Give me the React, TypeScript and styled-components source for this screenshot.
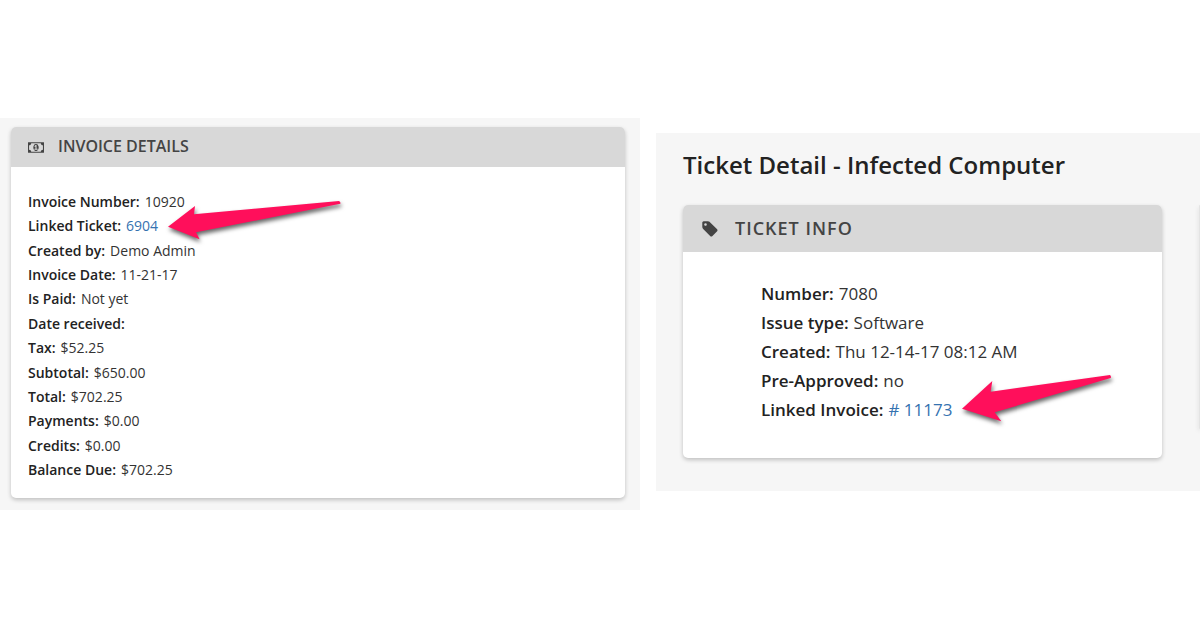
import React from "react";
import styled, { createGlobalStyle } from "styled-components";

const GlobalStyle = createGlobalStyle`
  * { box-sizing: border-box; }
  body {
    margin: 0;
    background: #fff;
    color: #333;
    font-family: "Open Sans", "Noto Sans", sans-serif;
  }
`;

const Page = styled.main`
  display: grid;
  grid-template-columns: minmax(0, 640fr) minmax(0, 544fr);
  column-gap: 16px;
  align-items: start;
  padding: 118px 0;
  overflow: hidden;
`;

const InvoicePane = styled.section`
  background: #f6f6f6;
  padding: 9px 15px 12px 11px;
`;

const TicketPane = styled.section`
  background: #f6f6f6;
  margin-top: 15px;
  padding: 15px 0 33px 27px;
  overflow: hidden;
`;

const Title = styled.h1`
  margin: 0 0 24px;
  font-size: 24px;
  line-height: 33px;
  font-weight: 600;
  color: #222;
`;

const CardRow = styled.div`
  display: flex;
  align-items: flex-start;
  gap: 37px;
`;

const Card = styled.article`
  flex: 1;
  min-width: 0;
  background: #fff;
  border-radius: 5px;
  box-shadow: 0 2px 4px rgba(0, 0, 0, 0.22);
`;

const NextCard = styled.div`
  flex: none;
  width: 1px;
  min-height: 224px;
  border-radius: 5px 0 0 5px;
  background: #e4e4e4;
  box-shadow: 0 2px 4px rgba(0, 0, 0, 0.22);
`;

const CardHeader = styled.header<{ $large?: boolean }>`
  display: flex;
  align-items: center;
  gap: ${(p) => (p.$large ? 16 : 14)}px;
  height: ${(p) => (p.$large ? 47 : 40)}px;
  padding: 0 ${(p) => (p.$large ? 18 : 17)}px;
  border-radius: 5px 5px 0 0;
  background: #d8d8d8;
  color: #444;
`;

const CardTitle = styled.h2<{ $large?: boolean }>`
  margin: 0;
  padding-bottom: 2px;
  font-size: ${(p) => (p.$large ? 18 : 16)}px;
  line-height: 24px;
  letter-spacing: ${(p) => (p.$large ? "1px" : "normal")};
  font-weight: 600;
`;

const Icon = styled.svg`
  flex: none;
  fill: #444;
`;

const Details = styled.dl<{ $large?: boolean }>`
  display: flex;
  flex-direction: column;
  justify-content: space-between;
  margin: 0;
  min-height: ${(p) => (p.$large ? 206 : 331)}px;
  padding: ${(p) => (p.$large ? "27px 20px 34px 78px" : "23px 17px 16px")};
  font-size: ${(p) => (p.$large ? 17 : 14)}px;
  line-height: ${(p) => (p.$large ? 29 : 24)}px;
`;

const Detail = styled.div`
  display: flex;
  gap: 5px;
  white-space: nowrap;
`;

const Label = styled.dt`
  font-weight: 600;
  color: #222;
`;

const Value = styled.dd`
  position: relative;
  margin: 0;
`;

const RecordLink = styled.a`
  color: #3572b0;
  text-decoration: none;
`;

const Arrow = styled.svg<{ $top: number }>`
  position: absolute;
  left: 100%;
  top: ${(p) => p.$top}px;
  margin-left: 10px;
  overflow: visible;
  fill: #ff0f5b;
  filter: drop-shadow(1px 3px 2px rgba(0, 0, 0, 0.6));
  pointer-events: none;
`;

const MoneyIcon = () => (
  <Icon width="16" height="15" viewBox="0 0 1920 1792" aria-hidden="true">
    <path d="M768 1152h384v-96h-128v-448h-114l-148 137 77 80q42-37 55-57h2v288h-128v96zm512-256q0 70-21 142t-59.5 134-101.5 101-138 39-138-39-101.5-101-59.5-134-21-142 21-142 59.5-134 101.5-101 138-39 138 39 101.5 101 59.5 134 21 142zm512 256v-512q-106 0-181-75t-75-181h-1152q0 106-75 181t-181 75v512q106 0 181 75t75 181h1152q0-106 75-181t181-75zm128-832v1152q0 26-19 45t-45 19h-1792q-26 0-45-19t-19-45v-1152q0-26 19-45t45-19h1792q26 0 45 19t19 45z" />
  </Icon>
);

const TagIcon = () => (
  <Icon width="18" height="18" viewBox="0 0 1792 1792" aria-hidden="true">
    <path d="M576 448q0-53-37.5-90.5t-90.5-37.5-90.5 37.5-37.5 90.5 37.5 90.5 90.5 37.5 90.5-37.5 37.5-90.5zm1067 576q0 53-37 90l-491 492q-39 37-91 37-53 0-90-37l-715-716q-38-37-64.5-101t-26.5-117v-416q0-52 38-90t90-38h416q53 0 117 26.5t102 64.5l715 714q37 39 37 91z" />
  </Icon>
);

const TicketArrow = () => (
  <Arrow $top={-13} width="173" height="39" viewBox="0 0 173 39" aria-hidden="true">
    <path d="M0 25.7 L27 5 L26 13.3 L171 0 Q173 1.5 172.3 2.7 L28 31.3 L31.6 38.3 Z" />
  </Arrow>
);

const InvoiceArrow = () => (
  <Arrow $top={-20} width="149" height="47" viewBox="0 0 149 47" aria-hidden="true">
    <path d="M0 33.7 L30.3 6 L28.7 16.7 L148 0 Q149.5 1.5 148.7 3 L32.7 37.3 L39.3 46.3 Z" />
  </Arrow>
);

type Item = { label: string; value?: string; link?: boolean };

const invoice: Item[] = [
  { label: "Invoice Number:", value: "10920" },
  { label: "Linked Ticket:", value: "6904", link: true },
  { label: "Created by:", value: "Demo Admin" },
  { label: "Invoice Date:", value: "11-21-17" },
  { label: "Is Paid:", value: "Not yet" },
  { label: "Date received:" },
  { label: "Tax:", value: "$52.25" },
  { label: "Subtotal:", value: "$650.00" },
  { label: "Total:", value: "$702.25" },
  { label: "Payments:", value: "$0.00" },
  { label: "Credits:", value: "$0.00" },
  { label: "Balance Due:", value: "$702.25" },
];

const ticket: Item[] = [
  { label: "Number:", value: "7080" },
  { label: "Issue type:", value: "Software" },
  { label: "Created:", value: "Thu 12-14-17 08:12 AM" },
  { label: "Pre-Approved:", value: "no" },
  { label: "Linked Invoice:", value: "# 11173", link: true },
];

function DetailList({ items, large, arrow }: { items: Item[]; large?: boolean; arrow: React.ReactNode }) {
  return (
    <Details $large={large}>
      {items.map(({ label, value, link }) => (
        <Detail key={label}>
          <Label>{label}</Label>
          <Value>
            {link ? <RecordLink href="#">{value}</RecordLink> : value}
            {link && arrow}
          </Value>
        </Detail>
      ))}
    </Details>
  );
}

export default function App() {
  return (
    <>
      <GlobalStyle />
      <Page>
        <InvoicePane>
          <Card>
            <CardHeader>
              <MoneyIcon />
              <CardTitle>INVOICE DETAILS</CardTitle>
            </CardHeader>
            <DetailList items={invoice} arrow={<TicketArrow />} />
          </Card>
        </InvoicePane>
        <TicketPane>
          <Title>Ticket Detail - Infected Computer</Title>
          <CardRow>
            <Card>
              <CardHeader $large>
                <TagIcon />
                <CardTitle $large>TICKET INFO</CardTitle>
              </CardHeader>
              <DetailList items={ticket} large arrow={<InvoiceArrow />} />
            </Card>
            <NextCard />
          </CardRow>
        </TicketPane>
      </Page>
    </>
  );
}
